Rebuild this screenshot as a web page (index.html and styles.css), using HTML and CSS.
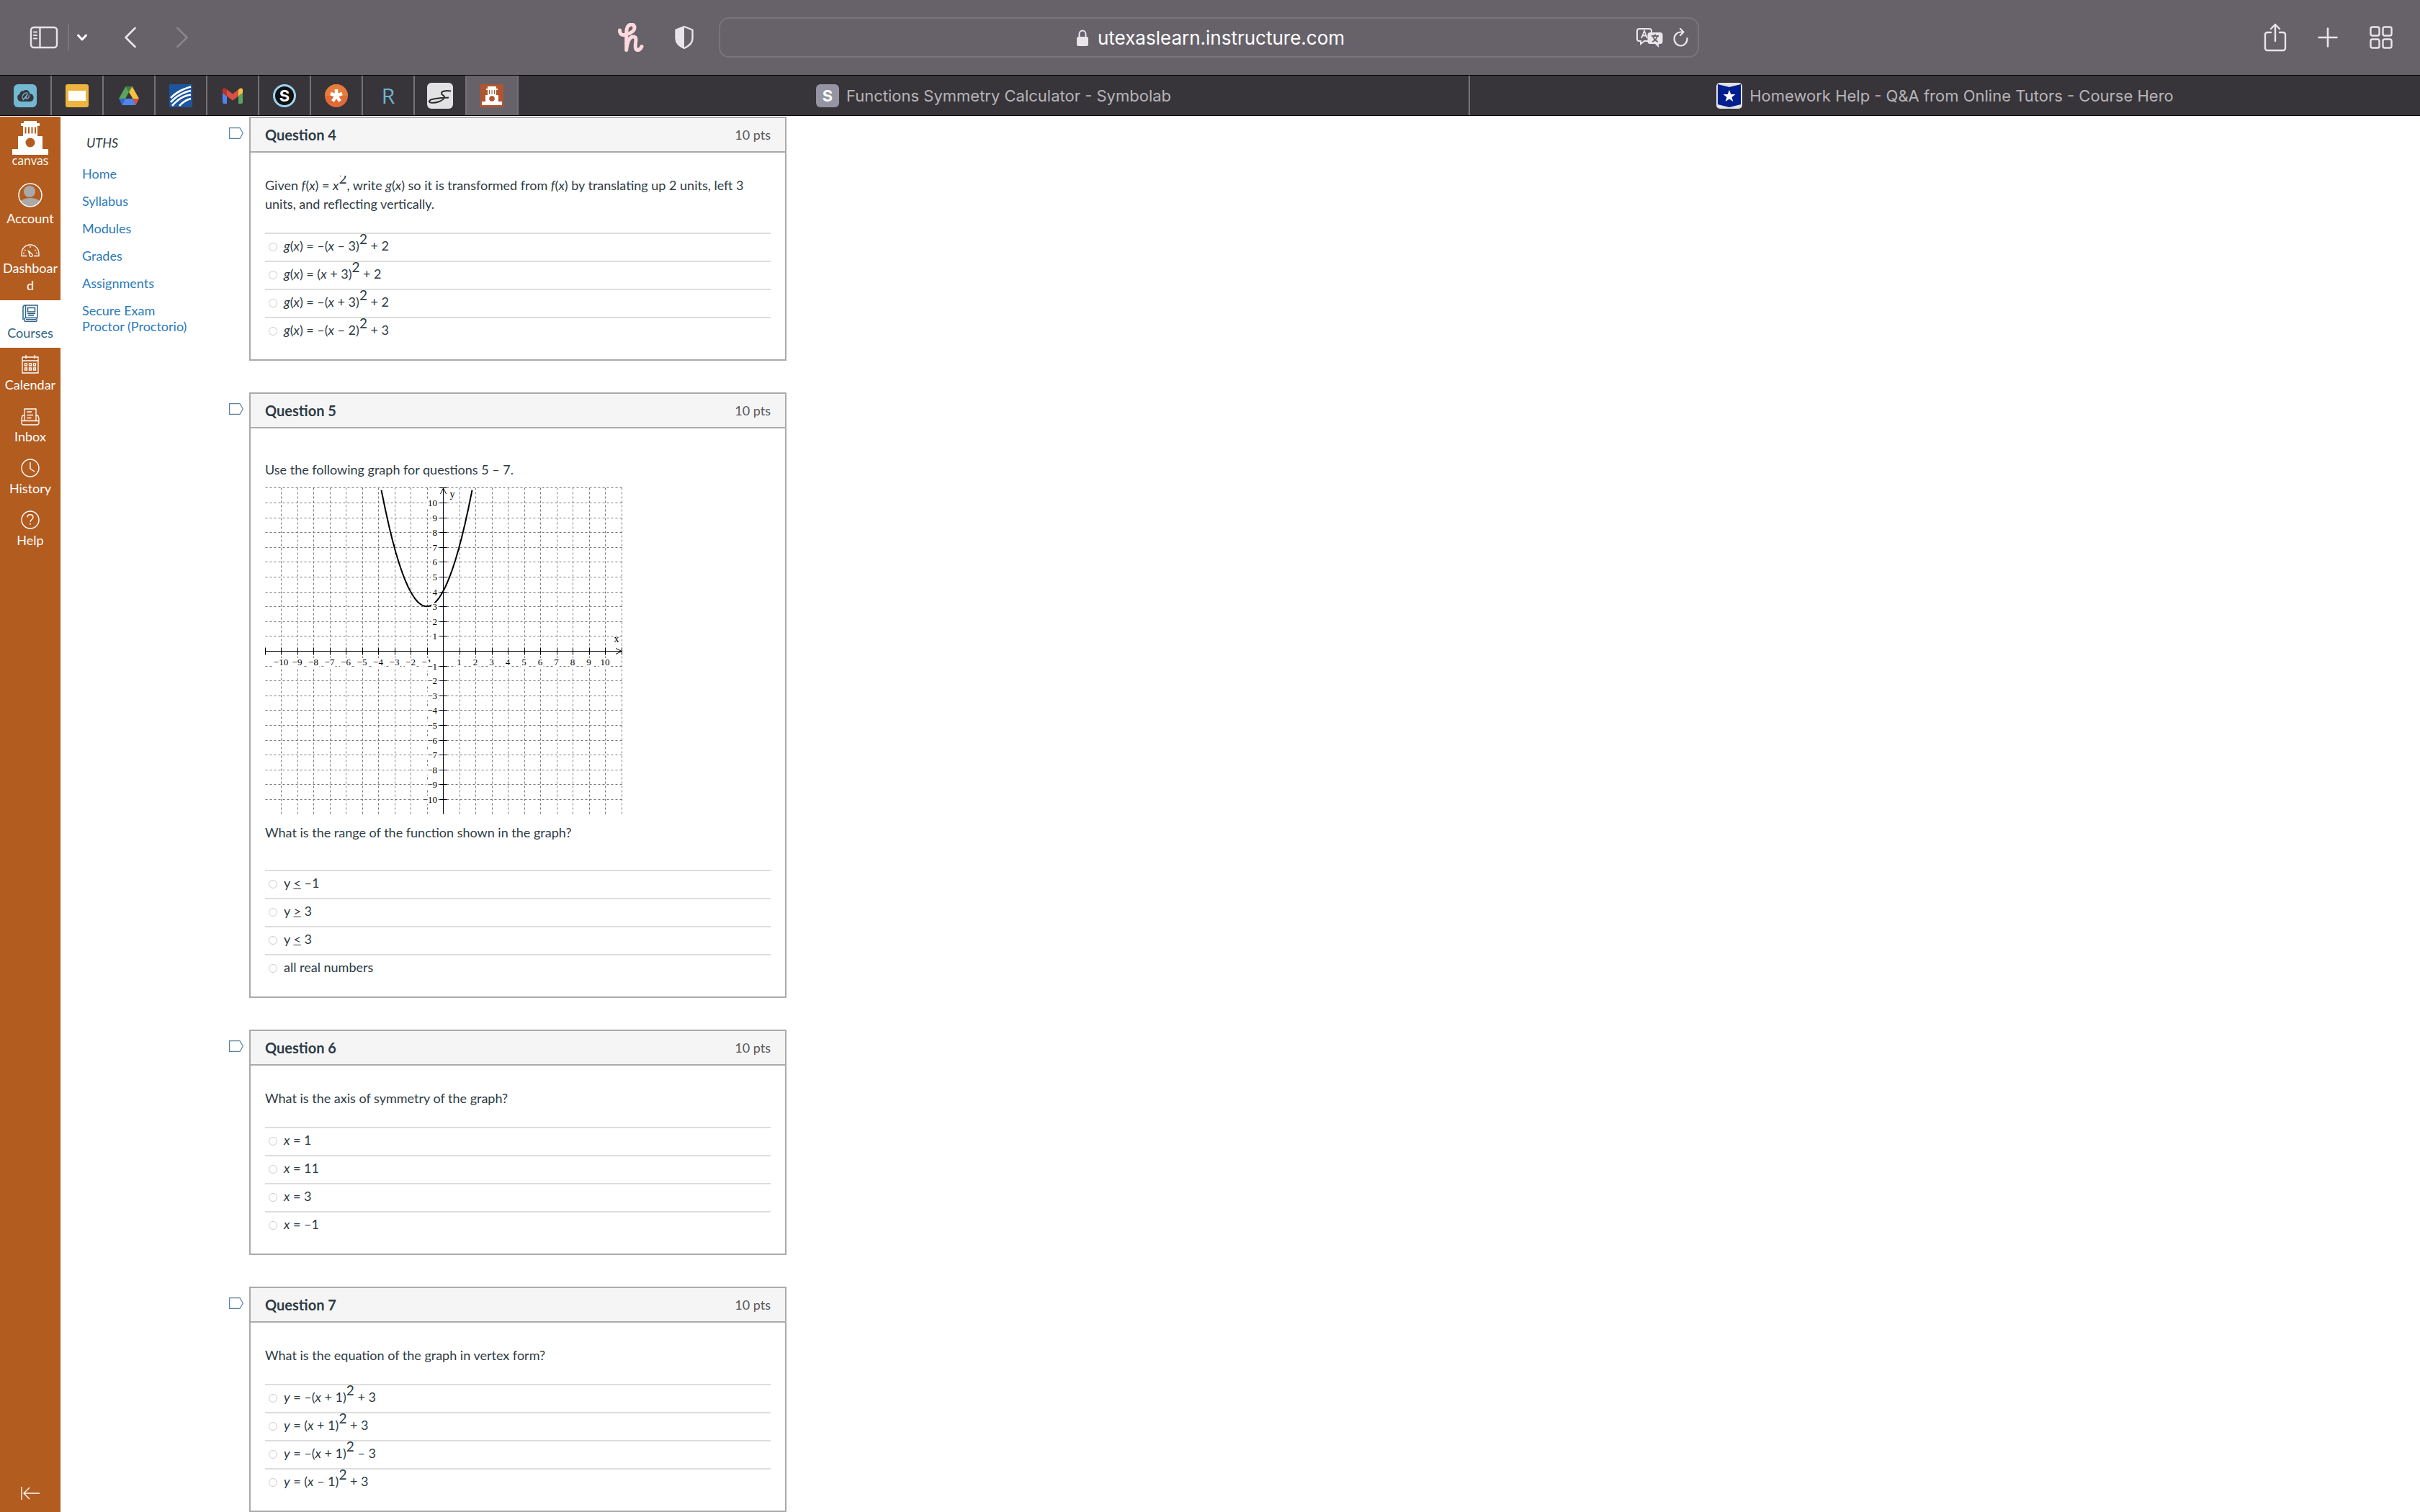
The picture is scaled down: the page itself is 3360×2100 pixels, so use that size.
FILE: index.html
```html
<!DOCTYPE html>
<html lang="en">
<head>
	<meta charset="UTF-8">
	<title>UTHS quiz</title>
	<link rel="stylesheet" href="styles.css">
</head>
<body>
	<header class="toolbar">
		<div class="tools tools-left">
			<button class="tool sidebar-btn" aria-label="Sidebar">
				<svg width="40" height="32" viewBox="0 0 40 32" fill="none" stroke="#e9e3ea" stroke-width="2.4"><rect x="2" y="2" width="36" height="28" rx="4"/><path d="M14.500 2v28"/><path d="M6 8.500h4M6 13h4M6 17.500h4" stroke-width="2" stroke-linecap="round"/></svg>
			</button>
			<span class="rule"></span>
			<button class="tool menu-btn" aria-label="Tab groups">
				<svg width="16" height="12" viewBox="0 0 16 12" fill="none" stroke="#fff" stroke-width="3" stroke-linecap="round" stroke-linejoin="round"><path d="M2.500 3l5.500 6 5.500-6"/></svg>
			</button>
			<button class="tool back-btn" aria-label="Back">
				<svg width="18" height="30" viewBox="0 0 18 30" fill="none" stroke="#e9e3ea" stroke-width="2.600" stroke-linecap="round" stroke-linejoin="round"><path d="M15.500 2L2.500 15l13 13"/></svg>
			</button>
			<button class="tool forward-btn" aria-label="Forward">
				<svg width="18" height="30" viewBox="0 0 18 30" fill="none" stroke="#8a858b" stroke-width="2.600" stroke-linecap="round" stroke-linejoin="round"><path d="M2.500 2l13 13-13 13"/></svg>
			</button>
			<button class="tool honey-btn" aria-label="Honey">
				<svg width="36" height="40" viewBox="0 0 36 40" fill="none" stroke="#ffd9de" stroke-width="5" stroke-linecap="round" stroke-linejoin="round"><path d="M2.500 10c0 6 3.500 7.500 9 6 6-1.800 11.500-5 11.500-9.500 0-3-2-4.500-4.300-4.500-5 0-7 5-7 11v24.500c1-10 4-18.500 9.500-18.500 4 0 4 3 3.500 7-.7 5-1.200 11.500 2.600 11.500 2.700 0 4.700-2.500 5.700-5"/></svg>
			</button>
			<button class="tool shield-btn" aria-label="Privacy report">
				<svg width="28" height="34" viewBox="0 0 28 34"><path d="M14 2l11.500 4.500v12c0 7-5 10.500-11.500 13.500C7.500 29 2.500 25.500 2.500 18.500v-12z" fill="none" stroke="#e9e3ea" stroke-width="2.400" stroke-linejoin="round"/><path d="M14 2L2.500 6.500v12c0 7 5 10.500 11.500 13.500z" fill="#e9e3ea"/></svg>
			</button>
		</div>
		<div class="address">
			<div class="address-text">
				<svg width="18" height="24" viewBox="0 0 18 24"><rect x="1" y="10" width="16" height="13" rx="2.500" fill="#e9e6ea"/><path d="M4.500 11V6.500a4.500 5 0 0 1 9 0V11" fill="none" stroke="#e9e6ea" stroke-width="2"/></svg>
				<span>utexaslearn.instructure.com</span>
			</div>
			<button class="tool" aria-label="Translate">
				<svg width="38" height="28" viewBox="0 0 38 28"><path d="M5 2h14a3 3 0 0 1 3 3v11a3 3 0 0 1-3 3h-7l-5 4v-4H5a3 3 0 0 1-3-3V5a3 3 0 0 1 3-3z" fill="none" stroke="#e9e6ea" stroke-width="2"/><path d="M8 15l4-10 4 10M9.500 11.500h5" fill="none" stroke="#e9e6ea" stroke-width="1.800"/><path d="M20 7h14a3.500 3.500 0 0 1 3.500 3.500v9A3.500 3.500 0 0 1 34 23h-2v5l-5-5h-7a3.500 3.500 0 0 1-3.500-3.500v-9A3.500 3.500 0 0 1 20 7z" fill="#e9e6ea"/><path d="M22 12h10M27 9.500V12M23 20c4-1.500 6-4 7-8M24 12c1 4 3 6.500 7 8" fill="none" stroke="#67626a" stroke-width="1.800"/></svg>
			</button>
			<button class="tool" aria-label="Reload">
				<svg width="22" height="28" viewBox="0 0 22 28" fill="none" stroke="#e9e6ea" stroke-width="2.200" stroke-linecap="round" stroke-linejoin="round"><path d="M19.500 15a9 9.500 0 1 1-8.500-8.500h3M10 2l4.500 4.500L10 11"/></svg>
			</button>
		</div>
		<div class="tools tools-right">
			<button class="tool" aria-label="Share">
				<svg width="32" height="40" viewBox="0 0 32 40" fill="none" stroke="#e9e3ea" stroke-width="2.400" stroke-linecap="round" stroke-linejoin="round"><path d="M10 13H5a3 3 0 0 0-3 3v19a3 3 0 0 0 3 3h22a3 3 0 0 0 3-3V16a3 3 0 0 0-3-3h-5M16 25V2M10 8l6-6 6 6"/></svg>
			</button>
			<button class="tool" aria-label="New tab">
				<svg width="28" height="28" viewBox="0 0 28 28" stroke="#e9e3ea" stroke-width="2.600" stroke-linecap="round"><path d="M14 1.500v25M1.500 14h25"/></svg>
			</button>
			<button class="tool" aria-label="Tab overview">
				<svg width="34" height="32" viewBox="0 0 34 32" fill="none" stroke="#e9e3ea" stroke-width="2.400"><rect x="2.500" y="1.500" width="12" height="12" rx="2.500"/><rect x="19.500" y="1.500" width="12" height="12" rx="2.500"/><rect x="2.500" y="18.500" width="12" height="12" rx="2.500"/><rect x="19.500" y="18.500" width="12" height="12" rx="2.500"/></svg>
			</button>
		</div>
	</header>

	<nav class="tabs">
		<a class="tab pinned" href="#" aria-label="Cloud"><svg width="32" height="32" viewBox="0 0 32 32"><rect width="32" height="32" rx="6" fill="#72b8d2"/><path d="M10 24a5.500 5.500 0 0 1-1.500-10.500C9 9.500 12 9 13.500 9.500 16 6.500 22 8 22 13c5 0 6 4 5.500 7-.5 3-3 4-5 4z" fill="#38353a"/><path d="M19 12c-4-1-8 4-7 7s5 1 6-4c-1 4-1 6 1 5s3-4 2-5M13 22l7-9" fill="none" stroke="#72b8d2" stroke-width="1.300"/></svg></a>
		<a class="tab pinned" href="#" aria-label="Slides"><svg width="32" height="32" viewBox="0 0 32 32"><rect width="32" height="32" rx="3" fill="#edb53f"/><rect x="4" y="9" width="24" height="14" fill="#fff"/></svg></a>
		<a class="tab pinned" href="#" aria-label="Drive"><svg width="32" height="32" viewBox="0 0 32 32"><path d="M11.500 3h9L16 11z" fill="#3c8140"/><path d="M11.500 3L2 20h9l5-9z" fill="#58a55c"/><path d="M20.500 3L16 11l5.500 9H30z" fill="#f3c042"/><path d="M2 20l4.500 9 4.500-9z" fill="#3468c8"/><path d="M11 20h10.500l4 9h-19z" fill="#5086ec"/><path d="M21.500 20H30l-4.500 9z" fill="#d85140"/></svg></a>
		<a class="tab pinned" href="#" aria-label="College Board"><svg width="32" height="32" viewBox="0 0 32 32"><rect width="32" height="32" fill="#1c549e"/><path d="M2 19Q13 8 30 3.500M2 25Q14 12 30 9M4 30Q16 16 30 14.500M14 30Q21 22 30 20" fill="none" stroke="#fff" stroke-width="2.700"/></svg></a>
		<a class="tab pinned" href="#" aria-label="Gmail"><svg width="32" height="32" viewBox="0 0 32 32"><path d="M2 12l6 4.500V27H4a2 2 0 0 1-2-2z" fill="#5086ec"/><path d="M30 12l-6 4.500V27h4a2 2 0 0 0 2-2z" fill="#58a55c"/><path d="M8 7.500l8 6 8-6v9l-8 6-8-6z" fill="#d85140"/><path d="M2 12V8c0-3 3-3.500 6-.5v9z" fill="#b93329"/><path d="M30 12V8c0-3-3-3.500-6-.5v9z" fill="#f3c042"/></svg></a>
		<a class="tab pinned" href="#" aria-label="Schoology"><span class="fav schoology">S</span></a>
		<a class="tab pinned" href="#" aria-label="Asterisk"><svg width="32" height="32" viewBox="0 0 32 32"><circle cx="16" cy="16" r="16" fill="#e26a37"/><path d="M0 16a16 16 0 0 1 32 0z" fill="#e67c3a"/><path d="M16 16V7M16 16l8-3M16 16l5 7.500M16 16l-5 7.500M16 16l-8-3" stroke="#fff" stroke-width="4.600"/></svg></a>
		<a class="tab pinned" href="#" aria-label="R"><span class="fav letter-r">R</span></a>
		<a class="tab pinned" href="#" aria-label="Sketch"><svg width="36" height="36" viewBox="0 0 36 36"><rect width="36" height="36" rx="6" fill="#e2e2e4"/><path d="M33 11.500c-7-1-13 0-13 3s5 3 4 6c-2 5-12 8-19 7-4-1-2-4 4-5 7-1.500 14-1.500 21-2" fill="none" stroke="#2b2b2b" stroke-width="2"/></svg></a>
		<a class="tab pinned active" href="#" aria-label="Canvas"><svg width="32" height="32" viewBox="0 0 32 32"><rect width="32" height="32" fill="#b1552f"/><path d="M10 3h12v3h2v2h-2v7h3v9h5v5H2v-5h5v-9h3V8H8V6h2z" fill="#fff"/><path d="M12.500 8v6M16 8v6M19.500 8v6" stroke="#b1552f"/><circle cx="16" cy="20" r="3.800" fill="#b1552f"/></svg></a>
		<a class="tab" href="#"><span class="fav symbolab">S</span>Functions Symmetry Calculator - Symbolab</a>
		<a class="tab" href="#"><svg width="36" height="36" viewBox="0 0 36 36"><rect width="36" height="36" rx="5" fill="#e2e2e4"/><path d="M2 2l16 4 16-4v28l-16 4-16-4z" fill="#001f8f"/><path d="M18 10l2.300 6h6.200l-5 4 1.800 6-5.300-3.600-5.300 3.600 1.800-6-5-4h6.200z" fill="#fff"/></svg>Homework Help - Q&amp;A from Online Tutors - Course Hero</a>
	</nav>

	<div class="page">
		<nav class="rail">
			<a class="logo" href="#">
				<svg width="52" height="48" viewBox="0 0 52 48"><path d="M17 0h18v3h4v4h-3v14h7v18h8v8H1v-8h8V21h7V7h-3V3h4z" fill="#fff"/><path d="M19.500 8.500v9M24 8.500v9M28.500 8.500v9M33 8.500v9" stroke="#b35c20" stroke-width="2"/><circle cx="26" cy="30" r="6.500" fill="#b35c20"/></svg>
				<span>canvas</span>
			</a>
			<a class="rail-item account" href="#">
				<svg width="34" height="34" viewBox="0 0 34 34"><clipPath id="face"><circle cx="17" cy="17" r="16"/></clipPath><g clip-path="url(#face)"><circle cx="16" cy="12" r="8" fill="#a9a9a9"/><ellipse cx="17" cy="32" rx="17" ry="11" fill="#a9a9a9"/></g><circle cx="17" cy="17" r="16" fill="none" stroke="#fff" stroke-width="1.500"/></svg>
				Account
			</a>
			<a class="rail-item" href="#">
				<svg width="26" height="18" viewBox="0 0 26 18" fill="none" stroke="#fff" stroke-width="1.300"><path d="M8 16.500H1V13a12 12 0 0 1 24 0v3.500h-7M10.500 9.500l5 4.500a2 2 0 1 1-3 2.500zM13 3v2M5 8l2 1M21 8l-2 1M3 12.500h2M21 12.500h2"/></svg>
				Dashboard
			</a>
			<a class="rail-item active" href="#">
				<svg width="22" height="24" viewBox="0 0 22 24" fill="none" stroke="#2b6388" stroke-width="1.500"><path d="M21 18.500H4a3 3 0 0 0 0 5h16M20 19v4M1 21V4a3 3 0 0 1 3-3h17v17.500M4.500 1v17M5 20.800h14"/><rect x="7.500" y="4.500" width="10" height="5.500"/><path d="M7 12.500h11M8 15h8"/></svg>
				Courses
			</a>
			<a class="rail-item" href="#">
				<svg width="24" height="26" viewBox="0 0 24 26" fill="none" stroke="#fff" stroke-width="1.300"><path d="M1 3h22v22H1zM1 8h22M6 0v5M18 0v5"/><path d="M4.500 12h3v3h-3zM10.500 12h3v3h-3zM16.500 12h3v3h-3zM4.500 18h3v3h-3zM10.500 18h3v3h-3zM16.500 18h3v3h-3z"/></svg>
				Calendar
			</a>
			<a class="rail-item" href="#">
				<svg width="26" height="26" viewBox="0 -2 26 26" fill="none" stroke="#fff" stroke-width="1.300"><path d="M5 17.500V1h16v16.500M5 10H2.500L1 14v6a3 3 0 0 0 3 3h18a3 3 0 0 0 3-3v-6l-1.500-4H21M1 17.500h24M8.500 5H15M8.500 9.500H17M8.500 13.500h6"/></svg>
				Inbox
			</a>
			<a class="rail-item" href="#">
				<svg width="26" height="26" viewBox="0 0 26 26" fill="none" stroke="#fff" stroke-width="1.400"><circle cx="13" cy="13" r="12"/><path d="M13 5v9l6 4"/></svg>
				History
			</a>
			<a class="rail-item" href="#">
				<svg width="26" height="26" viewBox="0 0 26 26" fill="none" stroke="#fff" stroke-width="1.400"><circle cx="13" cy="13" r="12"/><path d="M9 9.500c0-5 8-5 8 0 0 3-4 3-4 6.500M13 17.800v2"/></svg>
				Help
			</a>
			<button class="collapse" aria-label="Minimize navigation">
				<svg width="26" height="20" viewBox="0 0 26 20" fill="none" stroke="#fff" stroke-width="1.400"><path d="M1 1v18M26 10H5M12 2l-8 8 8 8"/></svg>
			</button>
		</nav>

		<nav class="course-nav">
			<p class="term">UTHS</p>
			<a href="#">Home</a>
			<a href="#">Syllabus</a>
			<a href="#">Modules</a>
			<a href="#">Grades</a>
			<a href="#">Assignments</a>
			<a href="#">Secure Exam Proctor (Proctorio)</a>
		</nav>

		<main class="quiz">
			<section class="row">
				<button class="flag" aria-label="Flag question 4"><svg width="20" height="16" viewBox="0 0 20 16" fill="#fff" stroke="#5b83a3" stroke-width="1.200"><path d="M.6.6h14.400l4.300 7.400-4.300 7.400H.6z"/></svg></button>
				<div class="question">
					<div class="head"><h2>Question 4</h2><span class="pts">10 pts</span></div>
					<div class="body">
						<div class="text">
							<p>Given <em>f</em>(<em>x</em>) = <em>x</em><sup>2</sup>, write <em>g</em>(<em>x</em>) so it is transformed from <em>f</em>(<em>x</em>) by translating up 2 units, left 3 units, and reflecting vertically.</p>
						</div>
						<label class="answer"><input type="radio" name="q4"><span><em>g</em>(<em>x</em>) = –(<em>x</em> – 3)<sup>2</sup> + 2</span></label>
						<label class="answer"><input type="radio" name="q4"><span><em>g</em>(<em>x</em>) = (<em>x</em> + 3)<sup>2</sup> + 2</span></label>
						<label class="answer"><input type="radio" name="q4"><span><em>g</em>(<em>x</em>) = –(<em>x</em> + 3)<sup>2</sup> + 2</span></label>
						<label class="answer"><input type="radio" name="q4"><span><em>g</em>(<em>x</em>) = –(<em>x</em> – 2)<sup>2</sup> + 3</span></label>
					</div>
				</div>
			</section>

			<section class="row">
				<button class="flag" aria-label="Flag question 5"><svg width="20" height="16" viewBox="0 0 20 16" fill="#fff" stroke="#5b83a3" stroke-width="1.200"><path d="M.6.6h14.400l4.300 7.400-4.300 7.400H.6z"/></svg></button>
				<div class="question">
					<div class="head"><h2>Question 5</h2><span class="pts">10 pts</span></div>
					<div class="body">
						<div class="text with-graph">
							<p>Use the following graph for questions 5 – 7.</p>
							<svg id="graph" class="graph" width="496" height="454" viewBox="0 0 496 454"></svg>
							<p>What is the range of the function shown in the graph?</p>
						</div>
						<label class="answer"><input type="radio" name="q5"><span>y <u>&lt;</u> –1</span></label>
						<label class="answer"><input type="radio" name="q5"><span>y <u>&gt;</u> 3</span></label>
						<label class="answer"><input type="radio" name="q5"><span>y <u>&lt;</u> 3</span></label>
						<label class="answer"><input type="radio" name="q5"><span>all real numbers</span></label>
					</div>
				</div>
			</section>

			<section class="row">
				<button class="flag" aria-label="Flag question 6"><svg width="20" height="16" viewBox="0 0 20 16" fill="#fff" stroke="#5b83a3" stroke-width="1.200"><path d="M.6.6h14.400l4.300 7.400-4.300 7.400H.6z"/></svg></button>
				<div class="question">
					<div class="head"><h2>Question 6</h2><span class="pts">10 pts</span></div>
					<div class="body">
						<div class="text">
							<p>What is the axis of symmetry of the graph?</p>
						</div>
						<label class="answer"><input type="radio" name="q6"><span><em>x</em> = 1</span></label>
						<label class="answer"><input type="radio" name="q6"><span><em>x</em> = 11</span></label>
						<label class="answer"><input type="radio" name="q6"><span><em>x</em> = 3</span></label>
						<label class="answer"><input type="radio" name="q6"><span><em>x</em> = –1</span></label>
					</div>
				</div>
			</section>

			<section class="row">
				<button class="flag" aria-label="Flag question 7"><svg width="20" height="16" viewBox="0 0 20 16" fill="#fff" stroke="#5b83a3" stroke-width="1.200"><path d="M.6.6h14.400l4.300 7.400-4.300 7.400H.6z"/></svg></button>
				<div class="question">
					<div class="head"><h2>Question 7</h2><span class="pts">10 pts</span></div>
					<div class="body">
						<div class="text">
							<p>What is the equation of the graph in vertex form?</p>
						</div>
						<label class="answer"><input type="radio" name="q7"><span><em>y</em> = –(<em>x</em> + 1)<sup>2</sup> + 3</span></label>
						<label class="answer"><input type="radio" name="q7"><span><em>y</em> = (<em>x</em> + 1)<sup>2</sup> + 3</span></label>
						<label class="answer"><input type="radio" name="q7"><span><em>y</em> = –(<em>x</em> + 1)<sup>2</sup> – 3</span></label>
						<label class="answer"><input type="radio" name="q7"><span><em>y</em> = (<em>x</em> – 1)<sup>2</sup> + 3</span></label>
					</div>
				</div>
			</section>
		</main>
	</div>

	<script src="graph.js"></script>
</body>
</html>
```
FILE: graph.js
```js
// graph of y = (x + 1)^2 + 3 on a -11..11 grid
var svg = document.getElementById('graph');
var stepX = 22.5, stepY = 20.6;
var cx = 247, cy = 227;

function px(x){ return cx + x * stepX; }
function py(y){ return cy - y * stepY; }

function add(tag, attrs, text){
	var el = document.createElementNS('http://www.w3.org/2000/svg', tag);
	for (var k in attrs) {
		el.setAttribute(k, attrs[k]);
	}
	if (text) el.textContent = text;
	svg.appendChild(el);
}

function line(x1, y1, x2, y2, cls){
	add('line', {x1: Math.round(x1) + 0.5, y1: Math.round(y1) + 0.5, x2: Math.round(x2) + 0.5, y2: Math.round(y2) + 0.5, 'class': cls});
}

// grid
for (var i = -10; i <= 11; i++) {
	line(px(i), 0, px(i), 453, 'grid');
	line(0, py(i), 495, py(i), 'grid');
}

// parabola
var d = '';
for (var x = -3.8; x < 1.82; x += 0.05) {
	d += (d ? 'L' : 'M') + px(x).toFixed(1) + ' ' + py((x + 1) * (x + 1) + 3).toFixed(1);
}
add('path', {d: d, 'class': 'curve'});

// numbers, each on a white patch that hides the grid
function label(n, x, y, anchor){
	var s = String(n).replace('-', '\u2212');
	var w = s.length * 7 + 2;
	add('rect', {x: anchor == 'end' ? x - w + 1 : x - w / 2, y: y - 10, width: w, height: 12, fill: '#fff'});
	add('text', {x: x, y: y, 'text-anchor': anchor}, s);
}
for (i = -10; i <= 10; i++) {
	if (i != 0) label(i, px(i), cy + 20, 'middle');
}
for (i = -10; i <= 10; i++) {
	if (i != 0) label(i, cx - 8, py(i) + 5, 'end');
}

// axes and ticks
line(0, cy, 495, cy, 'axis');
line(cx, 0, cx, 453, 'axis');
for (i = -11; i <= 11; i++) {
	if (i != 0) {
		line(px(i), cy - 5, px(i), cy + 5, 'axis');
		line(cx - 5, py(i), cx + 5, py(i), 'axis');
	}
}
add('path', {d: 'M243.500 9l4-8 4 8M487 223.500l8 4-8 4', 'class': 'axis'});
add('text', {x: 260, y: 14, 'text-anchor': 'middle', 'class': 'axis-name'}, 'y');
add('text', {x: 488, y: 215, 'text-anchor': 'middle', 'class': 'axis-name'}, 'x');
```
FILE: styles.css
```css
*{
	box-sizing: border-box;
}
body{
	display: flex;
	flex-direction: column;
	margin: 0;
	height: 100vh;
	overflow: hidden;
	font-family: Lato, "Liberation Sans", sans-serif;
	font-size: 18px;
	line-height: 26px;
	color: #2d3b45;
	background: #fff;
}
a{
	text-decoration: none;
}
button{
	padding: 0;
	border: none;
	background: none;
	cursor: pointer;
}
svg{
	display: block;
	flex: none;
}

/* browser toolbar */
.toolbar{
	display: flex;
	align-items: center;
	flex: none;
	height: 104px;
	background: #67626a;
}
.tools{
	display: flex;
	align-items: center;
	flex: 1;
	padding: 0 37px 0 41px;
}
.tools-left{
	padding-right: 34px;
}
.tools-right{
	justify-content: flex-end;
	gap: 43px;
}
.rule{
	width: 2px;
	height: 36px;
	margin: 0 10px 0 13px;
	background: #7b767e;
}
.menu-btn{
	margin-right: 50px;
}
.back-btn{
	margin-right: 54px;
}
.honey-btn{
	margin-left: auto;
	margin-right: 42px;
}
.address{
	display: flex;
	align-items: center;
	gap: 14px;
	flex: 0 1 1361px;
	height: 56px;
	padding: 0 12px 0 104px;
	border: 2px solid #79747c;
	border-radius: 14px;
}
.address-text{
	display: flex;
	align-items: center;
	justify-content: center;
	gap: 12px;
	flex: 1;
	padding-top: 2px;
	font-family: Inter, "Liberation Sans", sans-serif;
	font-size: 26px;
	color: #fff;
}

/* tab strip */
.tabs{
	display: flex;
	flex: none;
	height: 57px;
	border-top: 1px solid #000;
	border-bottom: 1px solid #000;
	background: #38353a;
}
.tab{
	display: flex;
	align-items: center;
	justify-content: center;
	gap: 10px;
	flex: 1;
	border-right: 2px solid #747177;
	font-family: Inter, "Liberation Sans", sans-serif;
	font-size: 22px;
	color: #b6b4b8;
}
.tab:last-child{
	border-right: none;
}
.tab.pinned{
	flex: none;
	width: 72px;
}
.tab.active{
	background: #67626a;
}
.fav{
	width: 32px;
	height: 32px;
	line-height: 32px;
	text-align: center;
	font-weight: bold;
}
.schoology{
	border: 3px solid #9ad6f2;
	border-radius: 50%;
	line-height: 26px;
	background: #111;
	color: #fff;
}
.letter-r{
	font-family: "Open Sans", sans-serif;
	font-size: 30px;
	font-weight: 500;
	color: #6fb3cf;
}
.symbolab{
	border-radius: 6px;
	background: #9494a2;
	color: #fff;
}

/* canvas page */
.page{
	display: flex;
	flex: 1;
	min-height: 0;
	padding-top: 1px;
}
.rail{
	display: flex;
	flex-direction: column;
	flex: none;
	width: 84px;
	background: #b35c20;
}
.logo{
	display: flex;
	flex-direction: column;
	align-items: center;
	height: 82px;
	padding-top: 6px;
	font-family: "Open Sans", sans-serif;
	font-size: 16px;
	line-height: 14px;
	color: #fff;
}
.rail-item{
	padding: 10px 2px 9px;
	line-height: 24px;
	text-align: center;
	word-break: break-all;
	color: #fff;
}
.rail-item svg{
	margin: 0 auto 3px;
}
.rail-item.account{
	padding-bottom: 14px;
}
.rail-item.active{
	padding-top: 6px;
	background: #fff;
	color: #2b6388;
}
.collapse{
	display: flex;
	justify-content: center;
	margin-top: auto;
	padding: 16px 0;
}
.course-nav{
	flex: none;
	width: 234px;
	padding: 22px 46px 22px 30px;
	line-height: 22px;
}
.course-nav .term{
	margin: 3px 6px 13px;
	font-style: italic;
}
.course-nav a{
	display: block;
	padding: 8px 0;
	color: #2b7abc;
}

.quiz{
	display: flex;
	flex-direction: column;
	gap: 44px;
	flex: 0 1 774px;
}
.row{
	display: flex;
	align-items: flex-start;
	gap: 8px;
}
.flag{
	margin-top: 15px;
}
.question{
	flex: 1;
	border: 2px solid #aaa;
}
.head{
	display: flex;
	justify-content: space-between;
	padding: 10px 20px;
	border-bottom: 2px solid #aaa;
	background: #f5f5f5;
}
.head h2{
	margin: 0;
	font-size: 20px;
	line-height: 26px;
}
.pts{
	color: #595959;
}
.body{
	padding: 32px 20px 20px;
}
.text{
	margin-bottom: 27px;
	overflow: hidden;
}
.text p{
	margin: 0;
}
.with-graph{
	padding: 12px 0;
}
.graph{
	margin: 12px 0;
}
.answer{
	display: flex;
	align-items: flex-start;
	height: 39px;
	padding-top: 3px;
	border-top: 2px solid #ddd;
}
.answer input{
	appearance: none;
	width: 12px;
	height: 12px;
	margin: 9px 9px 0 5px;
	border: 1px solid #ccc;
	border-radius: 50%;
	background: #fff;
}
sup{
	font-size: 19px;
	line-height: 0;
	vertical-align: 9px;
}

/* graph */
.graph text{
	font-family: "Liberation Serif", serif;
	font-size: 13px;
	fill: #000;
}
.graph .axis-name{
	font-size: 14px;
}
.graph .grid{
	stroke: #777;
	stroke-dasharray: 3 3;
}
.graph .axis{
	fill: none;
	stroke: #000;
}
.graph .curve{
	fill: none;
	stroke: #000;
	stroke-width: 2;
}
```
